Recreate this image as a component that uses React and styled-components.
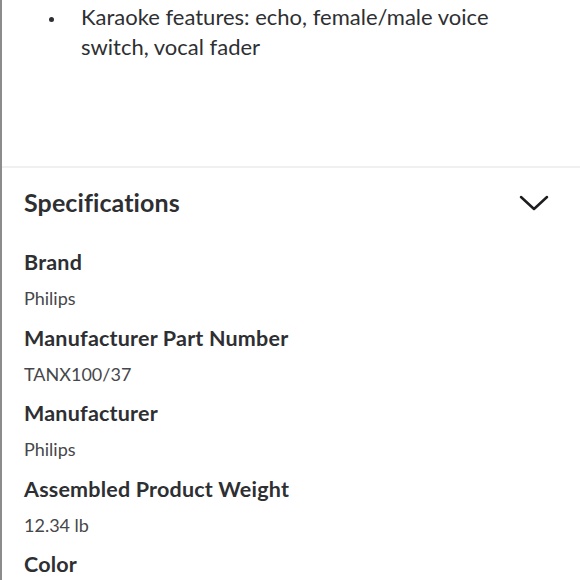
import React from 'react';
import styled, { createGlobalStyle } from 'styled-components';

const Global = createGlobalStyle`
  html, body {
    margin: 0;
    padding: 0;
    background: #fff;
  }
  body {
    font-family: Lato, "Open Sans", sans-serif;
    color: #2e2f32;
  }
`;

const Page = styled.div`
  width: 580px;
  height: 580px;
  overflow: hidden;
  border-left: 2px solid #8c8c8c;
  box-sizing: border-box;
`;

const Highlights = styled.ul`
  margin: 0;
  padding: 2px 0 0 79px;
  height: 168px;
  box-sizing: border-box;
  border-bottom: 2px solid #f0f0f0;
  list-style: none;
`;

const Bullet = styled.li`
  position: relative;
  max-width: 430px;
  font-size: 22px;
  line-height: 30px;
  color: #2e2f32;

  &::before {
    content: '';
    position: absolute;
    left: -32px;
    top: 15px;
    width: 5px;
    height: 5px;
    border-radius: 50%;
    background: #2e2f32;
  }
`;

const Section = styled.section`
  padding: 0 22px;
`;

const SectionHead = styled.div`
  display: flex;
  align-items: center;
  justify-content: space-between;
  height: 70px;
  margin-top: -1px;
`;

const Title = styled.h2`
  margin: 0;
  font-size: 25px;
  font-weight: 700;
  letter-spacing: 0.1px;
`;

const Chevron = styled.svg`
  width: 32px;
  height: 20px;
  margin: 2px 8px 0 0;
`;

const SpecList = styled.dl`
  margin: 11px 0 0;
`;

const Label = styled.dt`
  font-size: 21.5px;
  font-weight: 700;
  line-height: 28px;
  letter-spacing: 0.2px;
`;

const Value = styled.dd`
  margin: 10px 0 13.5px;
  font-size: 18px;
  line-height: 24px;
  color: #46474a;
`;

const specs = [
  ['Brand', 'Philips'],
  ['Manufacturer Part Number', 'TANX100/37'],
  ['Manufacturer', 'Philips'],
  ['Assembled Product Weight', '12.34 lb'],
  ['Color', ''],
];

export default function App() {
  return (
    <Page>
      <Global />
      <Highlights>
        <Bullet>Karaoke features: echo, female/male voice switch, vocal fader</Bullet>
      </Highlights>
      <Section>
        <SectionHead>
          <Title>Specifications</Title>
          <Chevron viewBox="0 0 32 20" fill="none">
            <path d="M3 4 L16 16 L29 4" stroke="#1d1d1f" strokeWidth="2.5" strokeLinecap="round" strokeLinejoin="round" />
          </Chevron>
        </SectionHead>
        <SpecList>
          {specs.map(([k, v]) => (
            <React.Fragment key={k}>
              <Label>{k}</Label>
              {v && <Value>{v}</Value>}
            </React.Fragment>
          ))}
        </SpecList>
      </Section>
    </Page>
  );
}
